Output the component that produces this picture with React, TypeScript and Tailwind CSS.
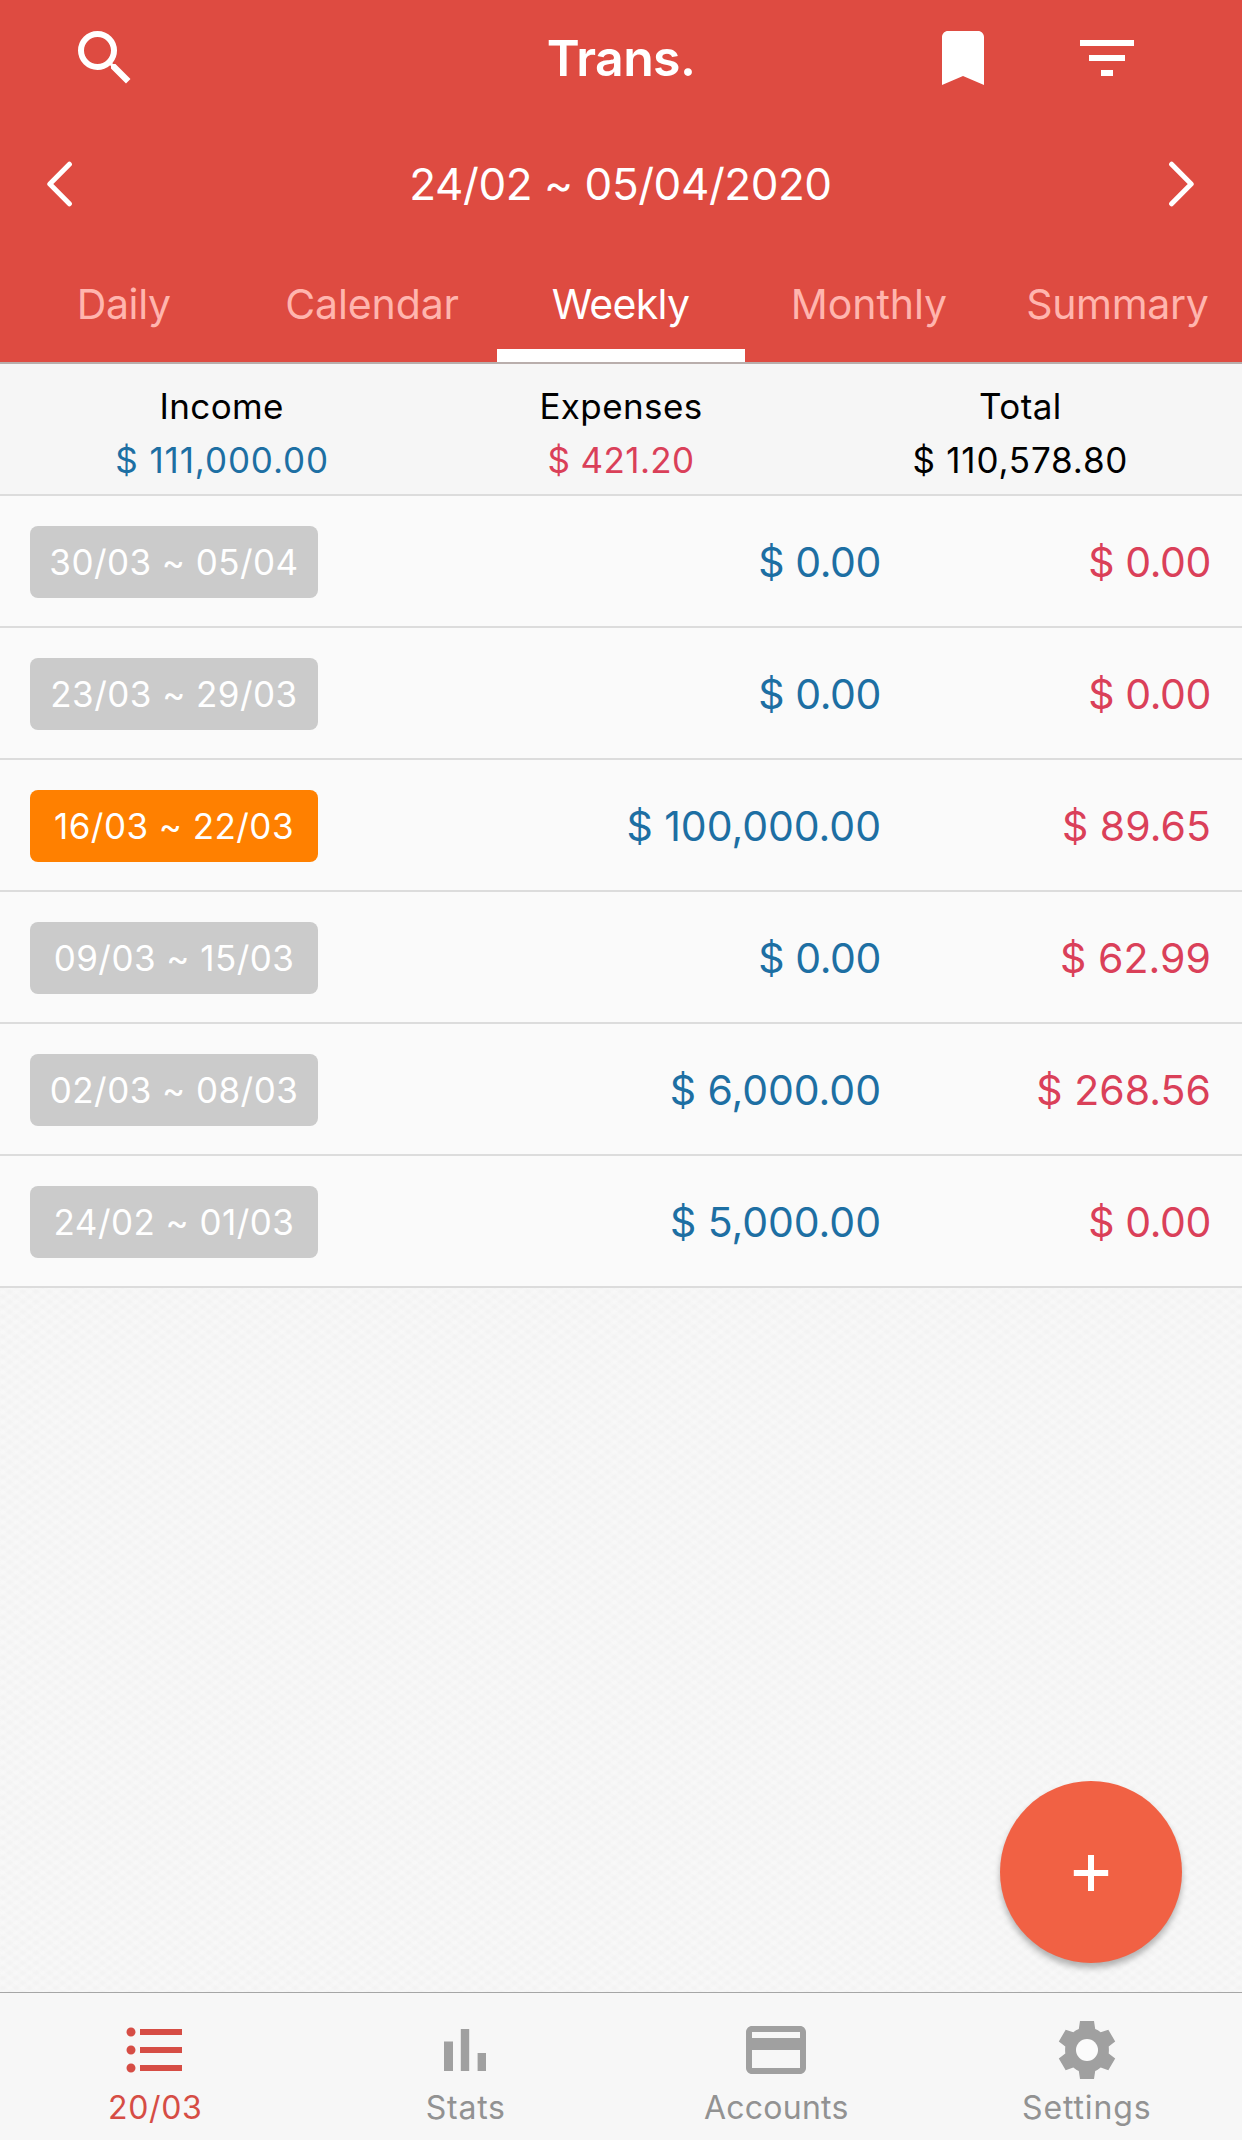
import type { ReactNode } from 'react';

type IconProps = { d: string; className?: string };

function Icon({ d, className = '' }: IconProps) {
  return (
    <svg viewBox="0 0 24 24" className={`size-[72px] fill-current ${className}`} aria-hidden="true">
      <path d={d} />
    </svg>
  );
}

const paths = {
  search:
    'M15.5 14h-.79l-.28-.27A6.471 6.471 0 0 0 16 9.5 6.5 6.5 0 1 0 9.5 16c1.61 0 3.09-.59 4.23-1.57l.27.28v.79l5 4.99L20.49 19l-4.99-5zm-6 0C7.01 14 5 11.99 5 9.5S7.01 5 9.5 5 14 7.01 14 9.5 11.99 14 9.5 14z',
  bookmark: 'M17 3H7c-1.1 0-2 .9-2 2v16l7-3 7 3V5c0-1.1-.9-2-2-2z',
  filter: 'M10 18h4v-2h-4v2zM3 6v2h18V6H3zm3 7h12v-2H6v2z',
  list: 'M4 10.5c-.83 0-1.5.67-1.5 1.5s.67 1.5 1.5 1.5 1.5-.67 1.5-1.5-.67-1.5-1.5-1.5zm0-6c-.83 0-1.5.67-1.5 1.5S3.17 7.5 4 7.5 5.5 6.83 5.5 6 4.83 4.5 4 4.5zm0 12c-.83 0-1.5.67-1.5 1.5s.67 1.5 1.5 1.5 1.5-.67 1.5-1.5-.67-1.5-1.5-1.5zM7 19h14v-2H7v2zm0-6h14v-2H7v2zm0-8v2h14V5H7z',
  stats: 'M5 9.2h3V19H5zM10.6 5h2.8v14h-2.8zM16.2 13H19v6h-2.8z',
  card: 'M20 4H4c-1.11 0-1.99.89-1.99 2L2 18c0 1.11.89 2 2 2h16c1.11 0 2-.89 2-2V6c0-1.11-.89-2-2-2zm0 14H4v-6h16v6zm0-10H4V6h16v2z',
};

function GearIcon() {
  return (
    <svg viewBox="-36 -36 72 72" className="size-[72px]" aria-hidden="true">
      <path
        className="fill-current"
        d="M-7-29H7L8.2-21Q11-20 13.7-17.7L21.3-20.3 28.2-8.5 21.7-3.5Q22.1 0 21.7 3.5L28.2 8.5 21.3 20.3 13.7 17.5Q11 19.8 8.2 21L7 29H-7L-8.2 21Q-11 19.8-13.7 17.5L-21.3 20.3-28.2 8.5-21.7 3.5Q-22.1 0-21.7-3.5L-28.2-8.5-21.3-20.3-13.7-17.7Q-11-20-8.2-21Z"
      />
      <circle r="11" className="fill-[#fbfbfb]" />
    </svg>
  );
}

function Chevron({ flip = false }: { flip?: boolean }) {
  return (
    <svg viewBox="0 0 26 46" className={flip ? 'h-[46px] w-[26px] -scale-x-100' : 'h-[46px] w-[26px]'} aria-hidden="true">
      <path d="M22.4 3.2 2.8 23 22.4 42.8" fill="none" stroke="white" strokeWidth="5" strokeLinecap="round" strokeLinejoin="round" />
    </svg>
  );
}

const tabs = [
  { label: 'Daily', spacing: 'tracking-[-0.34px]' },
  { label: 'Calendar', spacing: 'tracking-[-0.11px]' },
  { label: 'Weekly', spacing: 'tracking-[-0.69px]', active: true },
  { label: 'Monthly', spacing: 'tracking-[-0.04px]' },
  { label: 'Summary', spacing: 'tracking-[-0.35px]' },
];

const totals = [
  { label: 'Income', amount: '$ 111,000.00', color: 'text-[#1d6fa3]', spacing: 'tracking-[0.9px] pl-[1px]' },
  { label: 'Expenses', amount: '$ 421.20', color: 'text-[#da4059]', spacing: 'tracking-[0.4px]' },
  { label: 'Total', amount: '$ 110,578.80', color: 'text-black', spacing: 'tracking-[0.82px]' },
];

const weeks = [
  { range: '30/03 ~ 05/04', income: '$ 0.00', expense: '$ 0.00' },
  { range: '23/03 ~ 29/03', income: '$ 0.00', expense: '$ 0.00' },
  { range: '16/03 ~ 22/03', income: '$ 100,000.00', expense: '$ 89.65', current: true },
  { range: '09/03 ~ 15/03', income: '$ 0.00', expense: '$ 62.99' },
  { range: '02/03 ~ 08/03', income: '$ 6,000.00', expense: '$ 268.56' },
  { range: '24/02 ~ 01/03', income: '$ 5,000.00', expense: '$ 0.00' },
];

function amountSpacing(amount: string) {
  if (amount.length > 8) return 'tracking-[-0.04px]';
  return amount.length > 6 ? 'tracking-[0.05px]' : 'tracking-[-0.4px]';
}

function NavItem({ label, spacing, active = false, children }: { label: string; spacing: string; active?: boolean; children: ReactNode }) {
  return (
    <button className={`flex flex-col items-center pt-[21px] ${active ? 'text-[#d64d45]' : 'text-[#a0a0a0]'}`}>
      {children}
      <span className={`mt-[2px] text-[32px] leading-[40px] ${spacing} ${active ? '' : 'text-[#929292]'}`}>{label}</span>
    </button>
  );
}

export default function App() {
  return (
    <div className="relative flex h-[2140px] w-[1242px] flex-col overflow-hidden bg-[#f6f6f6] font-['Inter',sans-serif] text-black">
      <header className="flex h-[362px] flex-col bg-[#de4b41] text-white">
        <div className="grid h-[116px] grid-cols-3 items-center">
          <button className="w-fit pl-[69px]">
            <Icon d={paths.search} />
          </button>
          <h1 className="text-center text-[50px] leading-[60px] font-semibold tracking-[-0.6px]">Trans.</h1>
          <div className="flex justify-end gap-[72px] pr-[99px]">
            <Icon d={paths.bookmark} />
            <Icon d={paths.filter} />
          </div>
        </div>
        <div className="flex h-[136px] items-center justify-between pr-[48px] pl-[47px]">
          <Chevron />
          <span className="text-[44px] leading-[56px] tracking-[-0.45px]">24/02 ~ 05/04/2020</span>
          <Chevron flip />
        </div>
        <nav className="grid h-[110px] grid-cols-5">
          {tabs.map((tab) => (
            <button
              key={tab.label}
              className={`flex flex-col justify-between pt-[26px] text-[41px] leading-[52px] ${tab.spacing} ${tab.active ? 'text-white' : 'text-[#ffb5ae]'}`}
            >
              <span className="w-full pr-[1px] text-center">{tab.label}</span>
              {tab.active && <span className="h-[13px] w-full bg-white" />}
            </button>
          ))}
        </nav>
      </header>

      <section className="grid h-[134px] grid-cols-3 border-t-2 border-b-2 border-t-[#b9aeac] border-b-[#dcdcdc] bg-[#f6f6f6] px-[22px] pt-[15px] text-center text-[35px] leading-[54px]">
        {totals.map((t) => (
          <div key={t.label}>
            <div className="tracking-[0.4px]">{t.label}</div>
            <div className={`${t.color} ${t.spacing}`}>{t.amount}</div>
          </div>
        ))}
      </section>

      <ul>
        {weeks.map((w) => (
          <li key={w.range} className="flex h-[132px] items-center border-b-2 border-[#dcdcdc] bg-[#fafafa] pt-[2px] pr-[31px] pl-[30px] text-[41px]">
            <span
              className={`flex h-[72px] w-[288px] items-center justify-center rounded-lg text-[35px] tracking-[0.45px] text-white ${w.current ? 'bg-[#ff8000]' : 'bg-[#cbcbcb]'}`}
            >
              {w.range}
            </span>
            <span className={`flex-1 pt-[2px] text-right text-[#1d6fa3] ${amountSpacing(w.income)}`}>{w.income}</span>
            <span className={`w-[330px] pt-[2px] text-right text-[#da4059] ${amountSpacing(w.expense)}`}>{w.expense}</span>
          </li>
        ))}
      </ul>

      <main className="flex-1 bg-[#f3f3f3] bg-[repeating-linear-gradient(37deg,rgba(255,255,255,0.24)_0_2px,transparent_4px_6px,rgba(255,255,255,0.24)_8px),repeating-linear-gradient(-37deg,rgba(255,255,255,0.24)_0_2px,transparent_4px_6px,rgba(255,255,255,0.24)_8px)]" />

      <button className="absolute right-[60px] bottom-[177px] flex size-[182px] items-center justify-center rounded-full bg-[#f16144] pt-[2px] shadow-[0_5px_6px_rgba(0,0,0,0.28)]">
        <svg viewBox="0 0 36 36" className="size-9" aria-hidden="true">
          <path d="M.8 18H35.2M18 0V36" stroke="white" strokeWidth="6" />
        </svg>
      </button>

      <footer className="grid h-[148px] grid-cols-4 border-t border-[#a6a6a6] bg-[#f7f7f7]">
        <NavItem label="20/03" spacing="tracking-[0.67px]" active>
          <Icon d={paths.list} />
        </NavItem>
        <NavItem label="Stats" spacing="tracking-[0.78px]">
          <Icon d={paths.stats} className="mr-[2px]" />
        </NavItem>
        <NavItem label="Accounts" spacing="tracking-[0.24px]">
          <Icon d={paths.card} />
        </NavItem>
        <NavItem label="Settings" spacing="tracking-[0.85px]">
          <GearIcon />
        </NavItem>
      </footer>
    </div>
  );
}
